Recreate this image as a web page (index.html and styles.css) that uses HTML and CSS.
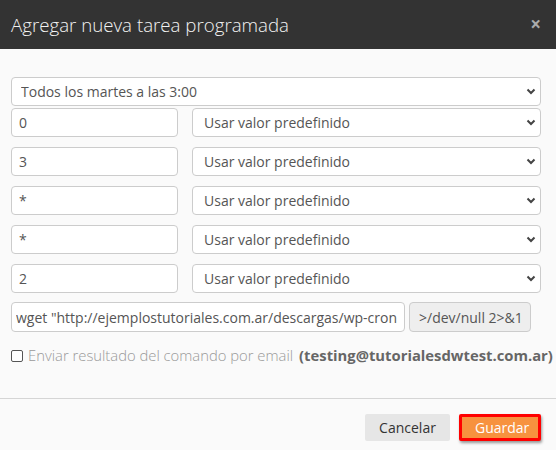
FILE: index.html
```html
<!DOCTYPE html>
<html lang="es">
<head>
    <meta charset="UTF-8">
    <meta name="viewport" content="width=device-width, initial-scale=1.0">
    <title>Agregar nueva tarea programada</title>
    <link rel="stylesheet" href="styles.css">
</head>
<body>
    <div class="modal">
        <div class="modal-header">
            <h1 class="modal-title">Agregar nueva tarea programada</h1>
            <button class="close-btn">&times;</button>
        </div>

        <div class="modal-body">
            <div class="select-wrap full">
                <select class="field">
                    <option>Todos los martes a las 3:00</option>
                </select>
                <svg class="chevron" width="10" height="7" viewBox="0 0 10 7"><path d="M1.5 1.5 L5 5 L8.5 1.5" fill="none" stroke="#444" stroke-width="2"/></svg>
            </div>

            <div class="cron-rows">
                <div class="cron-row">
                    <input class="field small" type="text" value="0">
                    <div class="select-wrap">
                        <select class="field"><option>Usar valor predefinido</option></select>
                        <svg class="chevron" width="10" height="7" viewBox="0 0 10 7"><path d="M1.5 1.5 L5 5 L8.5 1.5" fill="none" stroke="#444" stroke-width="2"/></svg>
                    </div>
                </div>
                <div class="cron-row">
                    <input class="field small" type="text" value="3">
                    <div class="select-wrap">
                        <select class="field"><option>Usar valor predefinido</option></select>
                        <svg class="chevron" width="10" height="7" viewBox="0 0 10 7"><path d="M1.5 1.5 L5 5 L8.5 1.5" fill="none" stroke="#444" stroke-width="2"/></svg>
                    </div>
                </div>
                <div class="cron-row">
                    <input class="field small" type="text" value="*">
                    <div class="select-wrap">
                        <select class="field"><option>Usar valor predefinido</option></select>
                        <svg class="chevron" width="10" height="7" viewBox="0 0 10 7"><path d="M1.5 1.5 L5 5 L8.5 1.5" fill="none" stroke="#444" stroke-width="2"/></svg>
                    </div>
                </div>
                <div class="cron-row">
                    <input class="field small" type="text" value="*">
                    <div class="select-wrap">
                        <select class="field"><option>Usar valor predefinido</option></select>
                        <svg class="chevron" width="10" height="7" viewBox="0 0 10 7"><path d="M1.5 1.5 L5 5 L8.5 1.5" fill="none" stroke="#444" stroke-width="2"/></svg>
                    </div>
                </div>
                <div class="cron-row">
                    <input class="field small" type="text" value="2">
                    <div class="select-wrap">
                        <select class="field"><option>Usar valor predefinido</option></select>
                        <svg class="chevron" width="10" height="7" viewBox="0 0 10 7"><path d="M1.5 1.5 L5 5 L8.5 1.5" fill="none" stroke="#444" stroke-width="2"/></svg>
                    </div>
                </div>
            </div>

            <div class="command-row">
                <input class="field command" type="text" value="wget &quot;http://ejemplostutoriales.com.ar/descargas/wp-cron">
                <span class="addon">&gt;/dev/null 2&gt;&amp;1</span>
            </div>

            <label class="email-check">
                <input type="checkbox">
                <span class="check-text">Enviar resultado del comando por email</span>
                <b class="email">(testing@tutorialesdwtest.com.ar)</b>
            </label>
        </div>

        <div class="modal-footer">
            <button class="btn btn-cancel">Cancelar</button>
            <button class="btn btn-save">Guardar</button>
        </div>
    </div>
</body>
</html>
```

FILE: styles.css
```css
body {
    margin: 0;
    padding: 0;
    background-color: #fafafa;
    font-family: 'Open Sans', sans-serif;
    overflow: hidden;
}
.modal {
    width: 556px;
    height: 450px;
    background-color: #fafafa;
}
.modal-header {
    height: 49px;
    background-color: #333;
    display: flex;
    align-items: center;
    justify-content: space-between;
    padding: 0 15px 0 11px;
}
.modal-title {
    margin: 0;
    font-size: 18.7px;
    font-weight: 300;
    color: #f2f2f2;
}
.close-btn {
    border: none;
    background: transparent;
    color: #aaa;
    font-family: 'Open Sans', sans-serif;
    font-size: 19px;
    font-weight: 700;
    padding: 0;
    line-height: 1;
    cursor: pointer;
}
.modal-body {
    padding: 28px 15px 0 11px;
}
.field {
    box-sizing: border-box;
    height: 29px;
    border: 1px solid #ccc;
    border-radius: 4px;
    background-color: #fff;
    font-family: 'Open Sans', sans-serif;
    font-size: 14px;
    color: #555;
    padding: 0 7px;
    outline: none;
}
.select-wrap {
    position: relative;
    flex: 1;
    display: flex;
}
.select-wrap .field {
    width: 100%;
    -webkit-appearance: none;
    appearance: none;
    padding-left: 11px;
}
.select-wrap.full .field {
    padding-left: 9px;
}
.chevron {
    position: absolute;
    right: 5px;
    top: 11px;
    pointer-events: none;
}
.cron-rows {
    margin-top: 2px;
    display: flex;
    flex-direction: column;
    gap: 10px;
}
.cron-row {
    display: flex;
    gap: 14px;
}
.field.small {
    width: 167px;
}
.command-row {
    margin-top: 9px;
    display: flex;
    gap: 4px;
}
.field.command {
    width: 394px;
    height: 30px;
    padding: 0 4px;
}
.addon {
    box-sizing: border-box;
    flex: none;
    width: 122px;
    height: 30px;
    display: flex;
    align-items: center;
    padding: 0 9px;
    background-color: #eee;
    border: 1px solid #ccc;
    border-radius: 4px;
    font-size: 14px;
    color: #555;
    white-space: nowrap;
}
.email-check {
    margin-top: 13px;
    display: flex;
    align-items: center;
    font-size: 14.8px;
    white-space: nowrap;
}
.email-check input {
    flex: none;
    -webkit-appearance: none;
    appearance: none;
    width: 12px;
    height: 12px;
    margin: 2px 5px 0 0;
    border: 1px solid #555;
    border-radius: 2px;
    background-color: #fff;
}
.check-text {
    color: #999;
    font-weight: 300;
}
.email {
    margin-left: 6px;
    color: #666;
    font-weight: 700;
}
.modal-footer {
    margin-top: 33px;
    border-top: 1px solid #d5d5d5;
    display: flex;
    justify-content: flex-end;
    gap: 9px;
    padding: 15px 15px 0 0;
}
.btn {
    box-sizing: border-box;
    height: 27px;
    border: none;
    border-radius: 2px;
    font-family: 'Open Sans', sans-serif;
    font-size: 14px;
    padding: 0 13px;
    cursor: pointer;
}
.btn-cancel {
    background-color: #e6e6e6;
    color: #333;
    width: 85px;
}
.btn-save {
    background-color: #f7923f;
    color: #fff;
    width: 82px;
    border: 3px solid #f00;
    box-shadow: 1px 2px 3px rgba(0, 0, 0, 0.4);
}
```
